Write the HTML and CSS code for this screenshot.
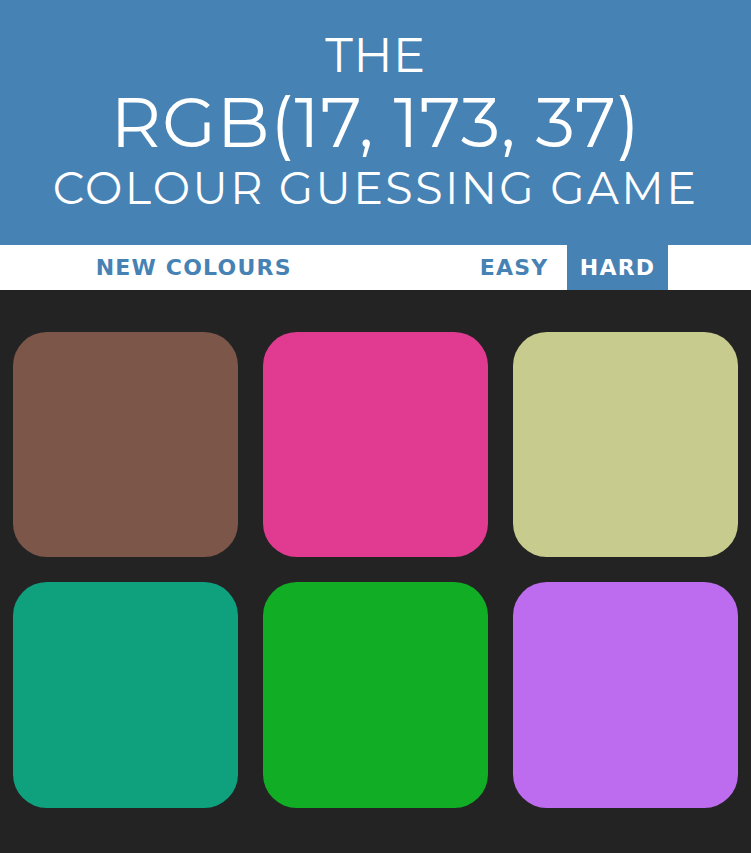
FILE: index.html
```html
<!DOCTYPE html>
<html lang="en">
<head>
<meta charset="utf-8">
<title>Colour Guessing Game</title>
<link rel="stylesheet" href="styles.css">
</head>
<body>
<header class="title">
  <span class="title-line title-the">The</span>
  <span class="title-line title-rgb">RGB(17, 173, 37)</span>
  <span class="title-line title-sub">Colour Guessing Game</span>
</header>
<nav class="stripe">
  <button class="btn">New Colours</button>
  <span class="message"></span>
  <button class="btn">Easy</button>
  <button class="btn btn-selected">Hard</button>
</nav>
<main class="board">
  <div class="square sq-brown"></div>
  <div class="square sq-pink"></div>
  <div class="square sq-khaki"></div>
  <div class="square sq-teal"></div>
  <div class="square sq-green"></div>
  <div class="square sq-purple"></div>
</main>
</body>
</html>
```
FILE: styles.css
```css
html, body {
  margin: 0;
  padding: 0;
}
body {
  background: #232323;
  min-height: 853px;
}
.title {
  box-sizing: border-box;
  height: 245px;
  padding-top: 31px;
  background: #4682b4;
  color: #ffffff;
  text-align: center;
  text-transform: uppercase;
  font-family: "Montserrat", "Lato", sans-serif;
  font-weight: 400;
}
.title-line {
  display: block;
  line-height: 1;
  white-space: nowrap;
}
.title-the {
  font-size: 48px;
  margin-bottom: 8px;
  letter-spacing: 0.6px;
}
.title-rgb {
  font-size: 70px;
  margin-bottom: 9px;
  letter-spacing: 0.7px;
}
.title-sub {
  font-size: 44.5px;
  letter-spacing: 2.4px;
}
.stripe {
  display: flex;
  justify-content: center;
  align-items: stretch;
  gap: 6.5px;
  height: 45px;
  background: #ffffff;
}
.btn {
  border: none;
  margin: 0;
  padding: 1px 12.5px 0;
  background: #ffffff;
  color: #4682b4;
  font-family: "DejaVu Sans", "Verdana", sans-serif;
  font-weight: 700;
  font-size: 22px;
  letter-spacing: 1.2px;
  text-transform: uppercase;
  line-height: 1;
  cursor: pointer;
}
.btn-selected {
  background: #4682b4;
  color: #ffffff;
}
.message {
  width: 150px;
}
.board {
  display: grid;
  grid-template-columns: repeat(3, 1fr);
  gap: 25px;
  padding: 42px 12.5px 0;
}
.square {
  aspect-ratio: 1 / 1;
  border-radius: 15%;
}
.sq-brown { background: rgb(123, 86, 73); }
.sq-pink { background: rgb(224, 59, 145); }
.sq-khaki { background: rgb(200, 203, 142); }
.sq-teal { background: rgb(15, 160, 126); }
.sq-green { background: rgb(17, 173, 37); }
.sq-purple { background: rgb(189, 108, 239); }
```
